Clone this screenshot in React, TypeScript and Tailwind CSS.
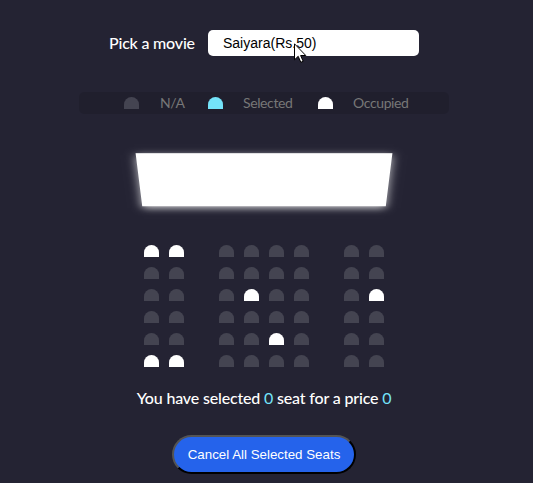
const seatMap = [
  '11000000',
  '00000000',
  '00010001',
  '00000000',
  '00001000',
  '11000000',
];

function Seat({ color }: { color: string }) {
  return <div className={`h-[12px] w-[15px] shrink-0 rounded-t-[10px] ${color}`} />;
}

function Legend() {
  return (
    <ul className="mt-[36px] flex h-[22px] w-[370px] items-center rounded-[5px] bg-black/10 pl-[45px] text-[14px] leading-[22px] tracking-[-0.38px] text-[#777]">
      <li className="flex w-[84px] items-center">
        <Seat color="bg-[#444451]" />
        <span className="ml-[21px]">N/A</span>
      </li>
      <li className="flex w-[110px] items-center">
        <Seat color="bg-[#74e3f9]" />
        <span className="ml-[20px]">Selected</span>
      </li>
      <li className="flex items-center">
        <Seat color="bg-white" />
        <span className="ml-[20px]">Occupied</span>
      </li>
    </ul>
  );
}

export default function App() {
  return (
    <div className="h-[483px] w-[533px] overflow-hidden bg-[#242333] font-['Lato',sans-serif] text-white">
      <div className="flex w-[528px] flex-col items-center">
        <div className="mt-[30px] flex h-[26px] items-center">
          <label className="mr-[13px] w-[86px] whitespace-nowrap text-[16px] font-medium leading-[26px] tracking-[-0.2px]">Pick a movie</label>
          <div className="relative h-[26px] w-[211px] rounded-[5px] bg-white pl-[15px] font-['Liberation_Sans',Arial,sans-serif] text-[14px] leading-[26px] text-black">
            Saiyara(Rs.50)
            <svg className="absolute left-[86px] top-[13px]" width="13" height="21" viewBox="0 0 13 21">
              <path d="M.5.8v16l3.7-3.5 2.6 6 2.4-1-2.6-5.8h5.2z" fill="#fff" stroke="#000" strokeWidth="1" />
            </svg>
          </div>
        </div>

        <Legend />

        <div className="mt-[29px] [perspective:1000px]">
          <div className="h-[75px] w-[250px] bg-white shadow-[0_3px_10px_rgba(255,255,255,0.75)] [transform:rotateX(-45deg)]" />
        </div>

        <div className="mt-[27px] flex flex-col gap-[10px]">
          {seatMap.map((row, r) => (
            <div key={r} className="flex gap-[10px]">
              {row.split('').map((seat, i) => (
                <div key={i} className={i === 2 || i === 6 ? 'ml-[25px]' : ''}>
                  <Seat color={seat === '1' ? 'bg-white' : 'bg-[#444451]'} />
                </div>
              ))}
            </div>
          ))}
        </div>

        <p className="mt-[21px] text-[16px] font-medium leading-[20px] tracking-[-0.17px]">
          You have selected <span className="font-normal text-[#74e3f9]">0</span> seat for a price{' '}
          <span className="font-normal text-[#74e3f9]">0</span>
        </p>

        <button className="mt-[27px] h-[39px] w-[184px] rounded-[20px] border-2 border-black bg-[#2563eb] font-['Liberation_Sans',Arial,sans-serif] text-[13.333px] text-white [border-style:outset]">
          Cancel All Selected Seats
        </button>
      </div>
    </div>
  );
}
